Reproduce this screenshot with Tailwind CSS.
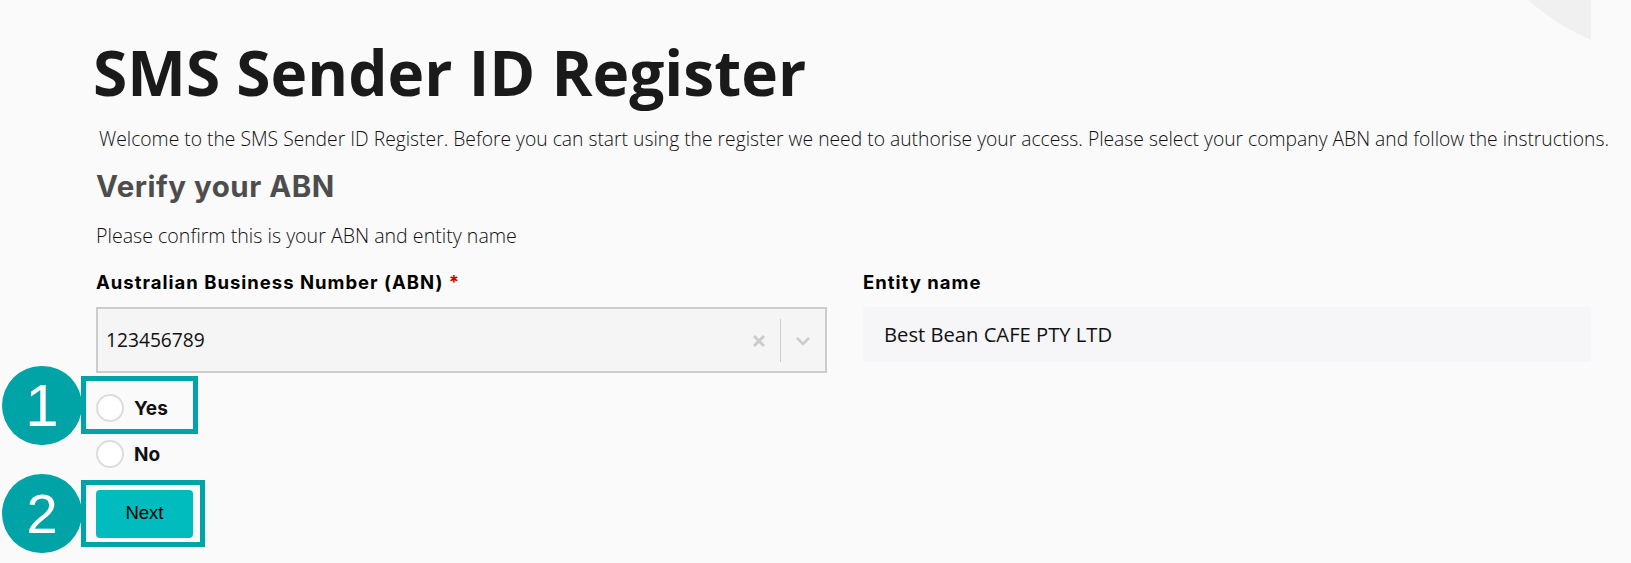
<!DOCTYPE html>
<html><head><meta charset="utf-8"><script src="https://cdn.jsdelivr.net/npm/@tailwindcss/browser@4"></script></head>
<body class="bg-[#fafafa] m-0 h-[563px] w-[1631px] overflow-hidden relative font-['Open_Sans',sans-serif]">
<svg class="absolute left-[1500px] top-0" width="91" height="40" viewBox="0 0 91 40"><path d="M28 0 C45 15 68 30 91 40 L91 0 Z" fill="#f0f0f0"/></svg>
<main class="pl-[96px] w-[1591px] flex flex-col">
  <h1 class="text-[62.2px] leading-[87px] font-bold text-[#1a1a1a] mt-[29px] -ml-[3px] whitespace-nowrap">SMS Sender ID Register</h1>
  <p class="text-[19.3px] leading-[24px] font-light text-[#111] ml-[3px] mt-[11px] whitespace-nowrap">Welcome to the SMS Sender ID Register. Before you can start using the register we need to authorise your access. Please select your company ABN and follow the instructions.</p>
  <h2 class="text-[29.5px] leading-[36px] font-bold tracking-[0.5px] text-[#4d4d4d] mt-[17px] font-['Inter',sans-serif]">Verify your ABN</h2>
  <p class="text-[19.6px] leading-[24px] font-light text-[#111] mt-[20px]">Please confirm this is your ABN and entity name</p>
  <div class="flex gap-[36px] mt-[22px]">
    <div class="w-[731px]">
      <div class="text-[18.5px] leading-[24px] font-bold tracking-[1px] text-black font-['Inter',sans-serif]">Australian Business Number (ABN) <span class="text-[#d00000]">*</span></div>
      <div class="mt-[13px] h-[66px] border-2 border-[#cccccc] bg-[#f5f5f5] flex items-center pl-[8px]">
        <span class="flex-1 text-[19.2px] text-[#111] mt-[1px]">123456789</span>
        <svg width="14" height="14" viewBox="0 0 14 14" class="mr-[14px] mt-[2px]"><path d="M2 2 L12 12 M12 2 L2 12" stroke="#cccccc" stroke-width="3"/></svg>
        <div class="w-px h-[43px] bg-[#cccccc]"></div>
        <svg width="16" height="10" viewBox="0 0 16 10" class="mx-[14px] mt-[2px]"><path d="M2 2 L8 8 L14 2" stroke="#cccccc" stroke-width="2.6" fill="none"/></svg>
      </div>
    </div>
    <div class="w-[728px]">
      <div class="text-[18.5px] leading-[24px] font-bold tracking-[1px] text-black font-['Inter',sans-serif]">Entity name</div>
      <div class="mt-[13px] h-[55px] rounded-[3px] bg-[#f6f5f7] flex items-center pl-[21px] text-[20.2px] text-[#111]">Best Bean CAFE PTY LTD</div>
    </div>
  </div>
  <div class="flex items-center gap-[10px] mt-[21px] h-[28px]">
    <span class="w-[28px] h-[28px] shrink-0 rounded-full bg-white border-2 border-[#dddddd]"></span>
    <span class="text-[19px] font-bold text-[#111] font-['Inter',sans-serif] mt-[3px]">Yes</span>
  </div>
  <div class="flex items-center gap-[10px] mt-[18px] h-[28px]">
    <span class="w-[28px] h-[28px] shrink-0 rounded-full bg-white border-2 border-[#dddddd]"></span>
    <span class="text-[19px] font-bold text-[#111] font-['Inter',sans-serif] mt-[2px]">No</span>
  </div>
  <button class="mt-[22px] w-[97px] h-[48px] rounded-[4px] bg-[#00bcbe] text-black text-[18.5px] pb-[2px] font-['Liberation_Sans',sans-serif]">Next</button>
</main>
<div class="absolute left-[81px] top-[376px] w-[117px] h-[58px] border-[5px] border-[#00a3a6]"></div>
<div class="absolute left-[81px] top-[480px] w-[124px] h-[67px] border-[5px] border-[#00a3a6]"></div>
<div class="absolute left-[2px] top-[366px] w-[80px] h-[79px] rounded-full bg-[#00a3a6] text-white text-[60px] font-['Liberation_Sans',sans-serif] flex items-center justify-center">1</div>
<div class="absolute left-[2px] top-[474px] w-[80px] h-[79px] rounded-full bg-[#00a3a6] text-white text-[56px] font-['Liberation_Sans',sans-serif] flex items-center justify-center">2</div>
</body></html>
